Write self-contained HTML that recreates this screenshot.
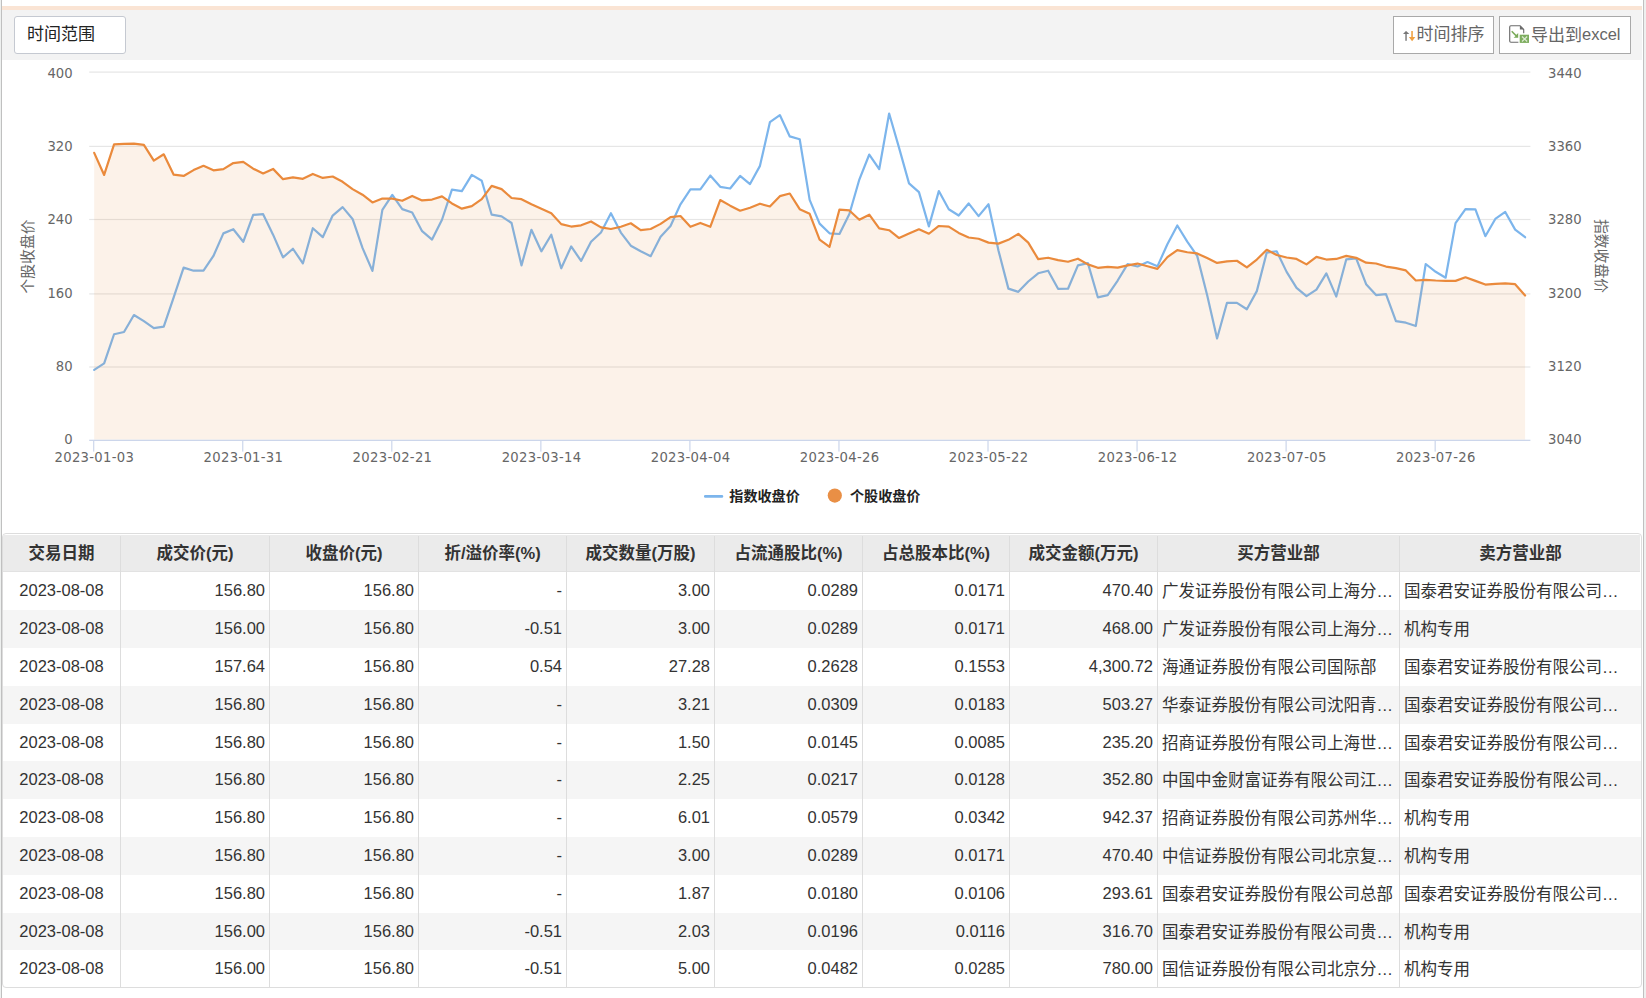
<!DOCTYPE html>
<html lang="zh-CN"><head><meta charset="utf-8"><title>大宗交易</title>
<style>
html,body{margin:0;padding:0;background:#fff;}
body{width:1646px;height:998px;position:relative;overflow:hidden;font-family:"Liberation Sans","Noto Sans CJK SC",sans-serif;}
.edge{position:absolute;top:0;height:998px;}
.peach{position:absolute;left:2px;top:6px;width:1640px;height:4px;background:#fae4d4;}
.bar{position:absolute;left:2px;top:10px;width:1640px;height:50px;background:#f3f3f3;}
.btn{position:absolute;top:16px;height:36px;line-height:36px;box-sizing:content-box;background:#fff;border:1px solid #a9a9a9;color:#666;font-size:16.5px;white-space:nowrap;}
.btn span{position:absolute;top:0;}
.b1{left:14px;width:110px;border-color:#c5c9d1;border-radius:3px;color:#222;}
.chart{position:absolute;left:0;top:0;}
.ax{font-family:"DejaVu Sans","Liberation Sans",sans-serif;font-size:13.2px;fill:#666;}
.tt{font-family:"Liberation Sans","Noto Sans CJK SC",sans-serif;font-size:14.8px;fill:#666;}
.lg{font-family:"Liberation Sans","Noto Sans CJK SC",sans-serif;font-size:14.1px;font-weight:bold;fill:#222;}
.tbl{position:absolute;left:2px;top:533px;width:1638px;height:453px;border:1px solid #ddd;border-radius:4px;overflow:hidden;background:#fff;font-size:16.5px;color:#333;}
.hd{position:absolute;left:0;top:1px;width:1637px;height:37px;line-height:36px;background:#ebebeb;font-weight:bold;border-bottom:1px solid #e2e2e2;box-sizing:border-box;}
.r{position:absolute;left:0;width:1638px;}
.z{background:#f5f5f5;}
.c{position:absolute;top:0;height:100%;box-sizing:border-box;white-space:nowrap;overflow:hidden;}
.h{text-align:center;}
.ce{text-align:center;top:-1px;}
.ri{text-align:right;padding-right:4px;top:-1px;}
.le{text-align:left;padding-left:4px;}
.vs{position:absolute;top:2px;width:1px;height:452px;background:#ddd;}
</style></head><body>
<div class="edge" style="left:0;width:1px;background:#eef0ef"></div>
<div class="edge" style="left:1px;width:1px;background:#c0c0c0"></div>
<div class="edge" style="left:1643px;width:1px;background:#c0c0c0"></div>
<div class="edge" style="left:1644px;width:2px;background:#eef0ef"></div>
<div class="peach"></div>
<div class="bar"></div>
<div class="btn b1"><span style="left:12px;font-size:17px">时间范围</span></div>
<div class="btn" style="left:1393px;width:99px">
<svg style="position:absolute;left:9px;top:14px" width="14" height="12" viewBox="0 0 14 12"><rect x="2.1" y="2.6" width="1.9" height="7.2" fill="#999"/><path d="M-0.2 3.1L3.05 -0.1L6.3 3.1Z" fill="#777"/><rect x="8.1" y="0" width="1.9" height="6.6" fill="#f2b262"/><path d="M5.9 6.1H12.3L9.1 10.2Z" fill="#f0a040"/></svg>
<span style="left:22.5px;font-size:17px">时间排序</span></div>
<div class="btn" style="left:1499px;width:130px">
<svg style="position:absolute;left:9px;top:8px" width="22" height="20" viewBox="0 0 22 20"><path d="M11 0.7H1.9Q0.7 0.7 0.7 1.9V16Q0.7 17.2 1.9 17.2H9.4M11 0.7L14.7 4.5V8.3" fill="none" stroke="#6b6b6b" stroke-width="1.15"/><path d="M10.9 0.5V4.6H15Z" fill="#6b6b6b"/><path d="M2.7 6.3L8 11.6" fill="none" stroke="#7aab5a" stroke-width="1.5"/><path d="M9.2 8V12.8H4.6L6.4 11.2L7.6 9.6Z" fill="#7aab5a"/><rect x="10.7" y="9.7" width="9.3" height="8.2" fill="#7dad5e"/><path d="M13 11.5L18.2 16.5M18.2 11.5L13 16.5" stroke="#dcead2" stroke-width="1.3" fill="none"/></svg>
<span style="left:31px"><b style="font-weight:normal;font-size:17px">导出到</b><i style="font-style:normal;position:relative;top:-1px">excel</i></span></div>
<svg class="chart" width="1646" height="533" viewBox="0 0 1646 533">
<rect x="89.2" y="71.50" width="1441.2" height="1.2" fill="#e6e6e6"/>
<rect x="89.2" y="145.80" width="1441.2" height="1.2" fill="#e6e6e6"/>
<rect x="89.2" y="218.90" width="1441.2" height="1.2" fill="#e6e6e6"/>
<rect x="89.2" y="293.30" width="1441.2" height="1.2" fill="#e6e6e6"/>
<rect x="89.2" y="366.40" width="1441.2" height="1.2" fill="#e6e6e6"/>
<polyline points="94.20,369.87 104.14,363.42 114.07,334.24 124.01,332.01 133.95,315.04 143.88,321.09 153.82,328.15 163.76,326.66 173.69,297.34 183.63,267.62 193.57,270.71 203.50,270.55 213.44,255.94 223.38,233.36 233.32,229.21 243.25,241.78 253.19,214.85 263.13,214.16 273.06,234.65 283.00,257.40 292.94,248.75 302.87,263.46 312.81,228.24 322.75,237.17 332.68,215.55 342.62,207.16 352.56,218.93 362.49,247.89 372.43,270.91 382.37,209.86 392.30,194.97 402.24,209.12 412.18,212.49 422.11,231.20 432.05,239.60 441.99,219.74 451.92,189.60 461.86,191.17 471.80,174.84 481.74,180.69 491.67,214.69 501.61,216.39 511.55,222.98 521.48,265.33 531.42,229.78 541.36,251.31 551.29,234.74 561.23,268.27 571.17,246.49 581.10,260.89 591.04,241.79 600.98,232.50 610.91,213.26 620.85,232.59 630.79,245.71 640.72,251.25 650.66,256.14 660.60,236.64 670.53,225.95 680.47,204.28 690.41,189.41 700.35,189.34 710.28,175.52 720.22,186.83 730.16,188.48 740.09,175.95 750.03,184.07 759.97,165.85 769.90,122.17 779.84,115.06 789.78,136.42 799.71,139.27 809.65,199.81 819.59,223.61 829.52,233.31 839.46,234.02 849.40,213.97 859.33,179.55 869.27,154.52 879.21,169.21 889.14,113.52 899.08,147.88 909.02,183.34 918.95,192.18 928.89,226.41 938.83,191.08 948.77,209.26 958.70,215.49 968.64,203.44 978.58,216.12 988.51,204.22 998.45,250.46 1008.39,288.65 1018.32,291.86 1028.26,281.51 1038.20,273.28 1048.13,270.73 1058.07,288.82 1068.01,288.76 1077.94,265.34 1087.88,263.16 1097.82,297.31 1107.75,295.08 1117.69,280.51 1127.63,264.11 1137.56,266.48 1147.50,262.03 1157.44,266.33 1167.38,244.25 1177.31,225.52 1187.25,241.65 1197.19,255.87 1207.12,294.95 1217.06,338.47 1227.00,302.74 1236.93,302.80 1246.87,309.24 1256.81,291.12 1266.74,252.54 1276.68,251.28 1286.62,271.89 1296.55,287.89 1306.49,296.14 1316.43,289.61 1326.36,273.35 1336.30,296.58 1346.24,259.44 1356.17,258.32 1366.11,284.16 1376.05,295.03 1385.98,294.09 1395.92,321.08 1405.86,322.71 1415.80,326.01 1425.73,264.01 1435.67,271.82 1445.61,277.68 1455.54,223.13 1465.48,209.22 1475.42,209.30 1485.35,236.23 1495.29,218.96 1505.23,211.94 1515.16,229.66 1525.10,237.22" fill="none" stroke="#7cb5ec" stroke-width="2.2" stroke-linejoin="round" stroke-linecap="round"/>
<polygon points="94.20,439.70 94.20,152.84 104.14,174.96 114.07,144.34 124.01,143.97 133.95,143.61 143.88,144.82 153.82,160.62 163.76,154.30 173.69,174.71 183.63,175.93 193.57,170.10 203.50,165.84 213.44,170.34 223.38,169.13 233.32,163.05 243.25,161.83 253.19,168.64 263.13,173.50 273.06,168.88 283.00,179.16 292.94,177.34 302.87,178.80 312.81,173.94 322.75,177.95 332.68,176.49 342.62,181.83 352.56,189.13 362.49,194.71 372.43,202.49 382.37,198.60 392.30,198.60 402.24,200.79 412.18,195.93 422.11,200.43 432.05,199.57 441.99,196.42 451.92,203.46 461.86,208.69 471.80,206.14 481.74,199.21 491.67,185.84 501.61,189.13 511.55,198.00 521.48,199.21 531.42,204.31 541.36,208.69 551.29,213.18 561.23,224.12 571.17,226.55 581.10,225.33 591.04,221.45 600.98,227.40 610.91,228.98 620.85,226.79 630.79,223.27 640.72,230.19 650.66,228.98 660.60,223.88 670.53,217.07 680.47,215.98 690.41,226.79 700.35,222.90 710.28,226.79 720.22,200.06 730.16,205.65 740.09,210.75 750.03,207.72 759.97,203.71 769.90,206.50 779.84,196.17 789.78,193.50 799.71,209.17 809.65,213.79 819.59,239.67 829.52,246.84 839.46,209.54 849.40,210.43 859.33,219.78 869.27,214.68 879.21,228.41 889.14,230.23 899.08,238.01 909.02,233.51 918.95,229.26 928.89,233.75 938.83,225.98 948.77,226.59 958.70,232.90 968.64,237.52 978.58,238.74 988.51,242.62 998.45,243.60 1008.39,239.83 1018.32,233.88 1028.26,242.62 1038.20,259.17 1048.13,257.72 1058.07,260.15 1068.01,261.73 1077.94,258.69 1087.88,264.40 1097.82,267.80 1107.75,266.83 1117.69,267.68 1127.63,265.37 1137.56,263.55 1147.50,266.22 1157.44,268.89 1167.38,257.11 1177.31,250.06 1187.25,252.25 1197.19,253.46 1207.12,258.08 1217.06,262.94 1227.00,261.36 1236.93,260.75 1246.87,267.44 1256.81,259.54 1266.74,249.82 1276.68,255.04 1286.62,257.47 1296.55,258.93 1306.49,264.40 1316.43,256.87 1326.36,259.54 1336.30,258.93 1346.24,255.89 1356.17,257.80 1366.11,262.66 1376.05,263.51 1385.98,266.55 1395.92,268.13 1405.86,270.44 1415.80,280.52 1425.73,279.91 1435.67,280.52 1445.61,280.89 1455.54,280.89 1465.48,277.24 1475.42,280.89 1485.35,284.53 1495.29,283.92 1505.23,283.32 1515.16,284.17 1525.10,295.47 1525.10,439.70" fill="#e98b3c" fill-opacity="0.115"/>
<polyline points="94.20,152.84 104.14,174.96 114.07,144.34 124.01,143.97 133.95,143.61 143.88,144.82 153.82,160.62 163.76,154.30 173.69,174.71 183.63,175.93 193.57,170.10 203.50,165.84 213.44,170.34 223.38,169.13 233.32,163.05 243.25,161.83 253.19,168.64 263.13,173.50 273.06,168.88 283.00,179.16 292.94,177.34 302.87,178.80 312.81,173.94 322.75,177.95 332.68,176.49 342.62,181.83 352.56,189.13 362.49,194.71 372.43,202.49 382.37,198.60 392.30,198.60 402.24,200.79 412.18,195.93 422.11,200.43 432.05,199.57 441.99,196.42 451.92,203.46 461.86,208.69 471.80,206.14 481.74,199.21 491.67,185.84 501.61,189.13 511.55,198.00 521.48,199.21 531.42,204.31 541.36,208.69 551.29,213.18 561.23,224.12 571.17,226.55 581.10,225.33 591.04,221.45 600.98,227.40 610.91,228.98 620.85,226.79 630.79,223.27 640.72,230.19 650.66,228.98 660.60,223.88 670.53,217.07 680.47,215.98 690.41,226.79 700.35,222.90 710.28,226.79 720.22,200.06 730.16,205.65 740.09,210.75 750.03,207.72 759.97,203.71 769.90,206.50 779.84,196.17 789.78,193.50 799.71,209.17 809.65,213.79 819.59,239.67 829.52,246.84 839.46,209.54 849.40,210.43 859.33,219.78 869.27,214.68 879.21,228.41 889.14,230.23 899.08,238.01 909.02,233.51 918.95,229.26 928.89,233.75 938.83,225.98 948.77,226.59 958.70,232.90 968.64,237.52 978.58,238.74 988.51,242.62 998.45,243.60 1008.39,239.83 1018.32,233.88 1028.26,242.62 1038.20,259.17 1048.13,257.72 1058.07,260.15 1068.01,261.73 1077.94,258.69 1087.88,264.40 1097.82,267.80 1107.75,266.83 1117.69,267.68 1127.63,265.37 1137.56,263.55 1147.50,266.22 1157.44,268.89 1167.38,257.11 1177.31,250.06 1187.25,252.25 1197.19,253.46 1207.12,258.08 1217.06,262.94 1227.00,261.36 1236.93,260.75 1246.87,267.44 1256.81,259.54 1266.74,249.82 1276.68,255.04 1286.62,257.47 1296.55,258.93 1306.49,264.40 1316.43,256.87 1326.36,259.54 1336.30,258.93 1346.24,255.89 1356.17,257.80 1366.11,262.66 1376.05,263.51 1385.98,266.55 1395.92,268.13 1405.86,270.44 1415.80,280.52 1425.73,279.91 1435.67,280.52 1445.61,280.89 1455.54,280.89 1465.48,277.24 1475.42,280.89 1485.35,284.53 1495.29,283.92 1505.23,283.32 1515.16,284.17 1525.10,295.47" fill="none" stroke="#ea8a3c" stroke-width="2.2" stroke-linejoin="round" stroke-linecap="round"/>
<rect x="89.2" y="439.70" width="1441.2" height="1.3" fill="#ccd6eb"/>
<rect x="93.10" y="440.30" width="1.2" height="11.3" fill="#ccd6eb"/>
<text class="ax" x="94.20" y="462.3" text-anchor="middle" textLength="79.4" lengthAdjust="spacing">2023-01-03</text>
<rect x="242.15" y="440.30" width="1.2" height="11.3" fill="#ccd6eb"/>
<text class="ax" x="243.25" y="462.3" text-anchor="middle" textLength="79.4" lengthAdjust="spacing">2023-01-31</text>
<rect x="391.20" y="440.30" width="1.2" height="11.3" fill="#ccd6eb"/>
<text class="ax" x="392.30" y="462.3" text-anchor="middle" textLength="79.4" lengthAdjust="spacing">2023-02-21</text>
<rect x="540.26" y="440.30" width="1.2" height="11.3" fill="#ccd6eb"/>
<text class="ax" x="541.36" y="462.3" text-anchor="middle" textLength="79.4" lengthAdjust="spacing">2023-03-14</text>
<rect x="689.31" y="440.30" width="1.2" height="11.3" fill="#ccd6eb"/>
<text class="ax" x="690.41" y="462.3" text-anchor="middle" textLength="79.4" lengthAdjust="spacing">2023-04-04</text>
<rect x="838.36" y="440.30" width="1.2" height="11.3" fill="#ccd6eb"/>
<text class="ax" x="839.46" y="462.3" text-anchor="middle" textLength="79.4" lengthAdjust="spacing">2023-04-26</text>
<rect x="987.41" y="440.30" width="1.2" height="11.3" fill="#ccd6eb"/>
<text class="ax" x="988.51" y="462.3" text-anchor="middle" textLength="79.4" lengthAdjust="spacing">2023-05-22</text>
<rect x="1136.46" y="440.30" width="1.2" height="11.3" fill="#ccd6eb"/>
<text class="ax" x="1137.56" y="462.3" text-anchor="middle" textLength="79.4" lengthAdjust="spacing">2023-06-12</text>
<rect x="1285.52" y="440.30" width="1.2" height="11.3" fill="#ccd6eb"/>
<text class="ax" x="1286.62" y="462.3" text-anchor="middle" textLength="79.4" lengthAdjust="spacing">2023-07-05</text>
<rect x="1434.57" y="440.30" width="1.2" height="11.3" fill="#ccd6eb"/>
<text class="ax" x="1435.67" y="462.3" text-anchor="middle" textLength="79.4" lengthAdjust="spacing">2023-07-26</text>
<text class="ax" x="72.6" y="78.1" text-anchor="end">400</text>
<text class="ax" x="1548" y="78.1" text-anchor="start">3440</text>
<text class="ax" x="72.6" y="151.1" text-anchor="end">320</text>
<text class="ax" x="1548" y="151.1" text-anchor="start">3360</text>
<text class="ax" x="72.6" y="224.1" text-anchor="end">240</text>
<text class="ax" x="1548" y="224.1" text-anchor="start">3280</text>
<text class="ax" x="72.6" y="298.1" text-anchor="end">160</text>
<text class="ax" x="1548" y="298.1" text-anchor="start">3200</text>
<text class="ax" x="72.6" y="371.1" text-anchor="end">80</text>
<text class="ax" x="1548" y="371.1" text-anchor="start">3120</text>
<text class="ax" x="72.6" y="444.1" text-anchor="end">0</text>
<text class="ax" x="1548" y="444.1" text-anchor="start">3040</text>
<text class="tt" transform="translate(33,256.5) rotate(-90)" text-anchor="middle">个股收盘价</text>
<text class="tt" transform="translate(1595.8,256) rotate(90)" text-anchor="middle">指数收盘价</text>
<rect x="704" y="494.9" width="19.2" height="2.8" rx="1.2" fill="#7cb5ec"/>
<text class="lg" x="729.3" y="501.3">指数收盘价</text>
<circle cx="834.8" cy="495.6" r="7.1" fill="#e98f45"/>
<text class="lg" x="850" y="501.3">个股收盘价</text>
</svg>
<div class="tbl">
<div class="hd">
<div class="c h" style="left:0px;width:117px">交易日期</div>
<div class="c h" style="left:118px;width:148px">成交价(元)</div>
<div class="c h" style="left:267px;width:148px">收盘价(元)</div>
<div class="c h" style="left:416px;width:147px">折/溢价率(%)</div>
<div class="c h" style="left:564px;width:147px">成交数量(万股)</div>
<div class="c h" style="left:712px;width:147px">占流通股比(%)</div>
<div class="c h" style="left:860px;width:146px">占总股本比(%)</div>
<div class="c h" style="left:1007px;width:147px">成交金额(万元)</div>
<div class="c h" style="left:1155px;width:241px">买方营业部</div>
<div class="c h" style="left:1397px;width:241px">卖方营业部</div>
</div>
<div class="r" style="top:38px;height:38px;line-height:38px">
<div class="c ce" style="left:0px;width:117px">2023-08-08</div>
<div class="c ri" style="left:118px;width:148px">156.80</div>
<div class="c ri" style="left:267px;width:148px">156.80</div>
<div class="c ri" style="left:416px;width:147px">-</div>
<div class="c ri" style="left:564px;width:147px">3.00</div>
<div class="c ri" style="left:712px;width:147px">0.0289</div>
<div class="c ri" style="left:860px;width:146px">0.0171</div>
<div class="c ri" style="left:1007px;width:147px">470.40</div>
<div class="c le" style="left:1155px;width:241px">广发证券股份有限公司上海分…</div>
<div class="c le" style="left:1397px;width:241px">国泰君安证券股份有限公司…</div>
</div>
<div class="r z" style="top:76px;height:38px;line-height:38px">
<div class="c ce" style="left:0px;width:117px">2023-08-08</div>
<div class="c ri" style="left:118px;width:148px">156.00</div>
<div class="c ri" style="left:267px;width:148px">156.80</div>
<div class="c ri" style="left:416px;width:147px">-0.51</div>
<div class="c ri" style="left:564px;width:147px">3.00</div>
<div class="c ri" style="left:712px;width:147px">0.0289</div>
<div class="c ri" style="left:860px;width:146px">0.0171</div>
<div class="c ri" style="left:1007px;width:147px">468.00</div>
<div class="c le" style="left:1155px;width:241px">广发证券股份有限公司上海分…</div>
<div class="c le" style="left:1397px;width:241px">机构专用</div>
</div>
<div class="r" style="top:114px;height:38px;line-height:38px">
<div class="c ce" style="left:0px;width:117px">2023-08-08</div>
<div class="c ri" style="left:118px;width:148px">157.64</div>
<div class="c ri" style="left:267px;width:148px">156.80</div>
<div class="c ri" style="left:416px;width:147px">0.54</div>
<div class="c ri" style="left:564px;width:147px">27.28</div>
<div class="c ri" style="left:712px;width:147px">0.2628</div>
<div class="c ri" style="left:860px;width:146px">0.1553</div>
<div class="c ri" style="left:1007px;width:147px">4,300.72</div>
<div class="c le" style="left:1155px;width:241px">海通证券股份有限公司国际部</div>
<div class="c le" style="left:1397px;width:241px">国泰君安证券股份有限公司…</div>
</div>
<div class="r z" style="top:152px;height:38px;line-height:38px">
<div class="c ce" style="left:0px;width:117px">2023-08-08</div>
<div class="c ri" style="left:118px;width:148px">156.80</div>
<div class="c ri" style="left:267px;width:148px">156.80</div>
<div class="c ri" style="left:416px;width:147px">-</div>
<div class="c ri" style="left:564px;width:147px">3.21</div>
<div class="c ri" style="left:712px;width:147px">0.0309</div>
<div class="c ri" style="left:860px;width:146px">0.0183</div>
<div class="c ri" style="left:1007px;width:147px">503.27</div>
<div class="c le" style="left:1155px;width:241px">华泰证券股份有限公司沈阳青…</div>
<div class="c le" style="left:1397px;width:241px">国泰君安证券股份有限公司…</div>
</div>
<div class="r" style="top:190px;height:37px;line-height:38px">
<div class="c ce" style="left:0px;width:117px">2023-08-08</div>
<div class="c ri" style="left:118px;width:148px">156.80</div>
<div class="c ri" style="left:267px;width:148px">156.80</div>
<div class="c ri" style="left:416px;width:147px">-</div>
<div class="c ri" style="left:564px;width:147px">1.50</div>
<div class="c ri" style="left:712px;width:147px">0.0145</div>
<div class="c ri" style="left:860px;width:146px">0.0085</div>
<div class="c ri" style="left:1007px;width:147px">235.20</div>
<div class="c le" style="left:1155px;width:241px">招商证券股份有限公司上海世…</div>
<div class="c le" style="left:1397px;width:241px">国泰君安证券股份有限公司…</div>
</div>
<div class="r z" style="top:227px;height:38px;line-height:38px">
<div class="c ce" style="left:0px;width:117px">2023-08-08</div>
<div class="c ri" style="left:118px;width:148px">156.80</div>
<div class="c ri" style="left:267px;width:148px">156.80</div>
<div class="c ri" style="left:416px;width:147px">-</div>
<div class="c ri" style="left:564px;width:147px">2.25</div>
<div class="c ri" style="left:712px;width:147px">0.0217</div>
<div class="c ri" style="left:860px;width:146px">0.0128</div>
<div class="c ri" style="left:1007px;width:147px">352.80</div>
<div class="c le" style="left:1155px;width:241px">中国中金财富证券有限公司江…</div>
<div class="c le" style="left:1397px;width:241px">国泰君安证券股份有限公司…</div>
</div>
<div class="r" style="top:265px;height:38px;line-height:38px">
<div class="c ce" style="left:0px;width:117px">2023-08-08</div>
<div class="c ri" style="left:118px;width:148px">156.80</div>
<div class="c ri" style="left:267px;width:148px">156.80</div>
<div class="c ri" style="left:416px;width:147px">-</div>
<div class="c ri" style="left:564px;width:147px">6.01</div>
<div class="c ri" style="left:712px;width:147px">0.0579</div>
<div class="c ri" style="left:860px;width:146px">0.0342</div>
<div class="c ri" style="left:1007px;width:147px">942.37</div>
<div class="c le" style="left:1155px;width:241px">招商证券股份有限公司苏州华…</div>
<div class="c le" style="left:1397px;width:241px">机构专用</div>
</div>
<div class="r z" style="top:303px;height:38px;line-height:38px">
<div class="c ce" style="left:0px;width:117px">2023-08-08</div>
<div class="c ri" style="left:118px;width:148px">156.80</div>
<div class="c ri" style="left:267px;width:148px">156.80</div>
<div class="c ri" style="left:416px;width:147px">-</div>
<div class="c ri" style="left:564px;width:147px">3.00</div>
<div class="c ri" style="left:712px;width:147px">0.0289</div>
<div class="c ri" style="left:860px;width:146px">0.0171</div>
<div class="c ri" style="left:1007px;width:147px">470.40</div>
<div class="c le" style="left:1155px;width:241px">中信证券股份有限公司北京复…</div>
<div class="c le" style="left:1397px;width:241px">机构专用</div>
</div>
<div class="r" style="top:341px;height:38px;line-height:38px">
<div class="c ce" style="left:0px;width:117px">2023-08-08</div>
<div class="c ri" style="left:118px;width:148px">156.80</div>
<div class="c ri" style="left:267px;width:148px">156.80</div>
<div class="c ri" style="left:416px;width:147px">-</div>
<div class="c ri" style="left:564px;width:147px">1.87</div>
<div class="c ri" style="left:712px;width:147px">0.0180</div>
<div class="c ri" style="left:860px;width:146px">0.0106</div>
<div class="c ri" style="left:1007px;width:147px">293.61</div>
<div class="c le" style="left:1155px;width:241px">国泰君安证券股份有限公司总部</div>
<div class="c le" style="left:1397px;width:241px">国泰君安证券股份有限公司…</div>
</div>
<div class="r z" style="top:379px;height:37px;line-height:38px">
<div class="c ce" style="left:0px;width:117px">2023-08-08</div>
<div class="c ri" style="left:118px;width:148px">156.00</div>
<div class="c ri" style="left:267px;width:148px">156.80</div>
<div class="c ri" style="left:416px;width:147px">-0.51</div>
<div class="c ri" style="left:564px;width:147px">2.03</div>
<div class="c ri" style="left:712px;width:147px">0.0196</div>
<div class="c ri" style="left:860px;width:146px">0.0116</div>
<div class="c ri" style="left:1007px;width:147px">316.70</div>
<div class="c le" style="left:1155px;width:241px">国泰君安证券股份有限公司贵…</div>
<div class="c le" style="left:1397px;width:241px">机构专用</div>
</div>
<div class="r" style="top:416px;height:37px;line-height:38px">
<div class="c ce" style="left:0px;width:117px">2023-08-08</div>
<div class="c ri" style="left:118px;width:148px">156.00</div>
<div class="c ri" style="left:267px;width:148px">156.80</div>
<div class="c ri" style="left:416px;width:147px">-0.51</div>
<div class="c ri" style="left:564px;width:147px">5.00</div>
<div class="c ri" style="left:712px;width:147px">0.0482</div>
<div class="c ri" style="left:860px;width:146px">0.0285</div>
<div class="c ri" style="left:1007px;width:147px">780.00</div>
<div class="c le" style="left:1155px;width:241px">国信证券股份有限公司北京分…</div>
<div class="c le" style="left:1397px;width:241px">机构专用</div>
</div>
<div class="vs" style="left:117px"></div>
<div class="vs" style="left:266px"></div>
<div class="vs" style="left:415px"></div>
<div class="vs" style="left:563px"></div>
<div class="vs" style="left:711px"></div>
<div class="vs" style="left:859px"></div>
<div class="vs" style="left:1006px"></div>
<div class="vs" style="left:1154px"></div>
<div class="vs" style="left:1396px"></div>
</div>
</body></html>
